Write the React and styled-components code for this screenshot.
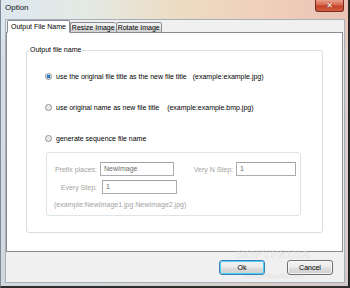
import React from 'react'
import styled, { createGlobalStyle } from 'styled-components'

const GlobalStyle = createGlobalStyle`
  html, body {
    margin: 0;
    padding: 0;
    background: #1e1e1e;
  }
  body {
    font-family: "Liberation Sans", Arial, sans-serif;
  }
`

const Window = styled.div`
  position: relative;
  width: 350px;
  height: 288px;
  box-sizing: border-box;
  display: flex;
  flex-direction: column;
  padding: 0 3px 3px 4px;
  border-left: 1px solid #7f8b96;
  border-right: 2px solid #262626;
  border-bottom: 2px solid #2e2e2e;
  background:
    linear-gradient(180deg, rgba(0,0,0,0) 0%, rgba(0,0,0,0) 10%, rgba(210,215,220,0.6) 20%, rgba(200,205,210,0.6) 100%),
    linear-gradient(90deg, #dde7ef 0%, #e4eae4 25%, #ecdcc4 50%, #f0d0ba 75%, #e9c3b6 100%);
  overflow: hidden;
`

const TitleBar = styled.div`
  height: 19px;
  display: flex;
  align-items: flex-start;
  justify-content: space-between;
  flex-shrink: 0;
`

const Title = styled.div`
  font-size: 8px;
  line-height: 8px;
  color: #111;
  margin-top: 4px;
`

const CloseButton = styled.div`
  width: 29px;
  height: 12px;
  margin-right: 1px;
  box-sizing: border-box;
  border: 1px solid #7a2a1e;
  border-top: none;
  border-radius: 0 0 3px 3px;
  background: linear-gradient(180deg, #e9a08a 0%, #d8674b 45%, #c3412a 55%, #d0603f 100%);
  display: flex;
  align-items: center;
  justify-content: center;
  color: #fff;
  font-size: 8px;
  font-weight: 700;
  font-family: "DejaVu Sans", sans-serif;
  text-shadow: 0 0 1px #5a1a10;
`

const Client = styled.div`
  flex: 1;
  display: flex;
  flex-direction: column;
  background: #f0f0f0;
  border: 1px solid #a7b0b8;
  box-sizing: border-box;
`

const TabStrip = styled.div`
  display: flex;
  align-items: flex-end;
  height: 13px;
  padding: 0 0 0 1px;
  position: relative;
  z-index: 1;
`

const Tab = styled.div`
  height: ${p => (p.active ? '13px' : '11px')};
  box-sizing: border-box;
  padding: 0 ${p => (p.active ? '3px' : '1px')};
  border: 1px solid #898c95;
  border-bottom: ${p => (p.active ? '1px solid #fff' : '1px solid #898c95')};
  border-right: ${p => (p.last || p.active ? '1px solid #898c95' : 'none')};
  border-radius: 2px 2px 0 0;
  background: ${p => (p.active ? '#fff' : 'linear-gradient(180deg, #f2f2f2 0%, #ebebeb 50%, #dddddd 51%, #cfcfcf 100%)')};
  font-size: 7px;
  line-height: ${p => (p.active ? '11px' : '9px')};
  color: #000;
  white-space: nowrap;
`

const Panel = styled.div`
  height: 220px;
  margin: -1px 1px 0 0;
  background: #fff;
  border: 1px solid #898c95;
  box-sizing: border-box;
  display: flex;
  flex-direction: column;
`

const Group = styled.fieldset`
  margin: 13px 19px 18px 19px;
  padding: 0;
  border: 1px solid #d5dfe5;
  border-radius: 3px;
  flex: 1;
  display: flex;
  flex-direction: column;
  min-width: 0;
`

const Legend = styled.legend`
  font-size: 7px;
  line-height: 8px;
  padding: 0 1px;
  margin-left: 2px;
  color: #000;
`

const OptionRow = styled.label`
  display: flex;
  align-items: center;
  height: 10px;
  margin: ${p => p.top}px 0 0 18px;
  font-size: 7px;
  color: #000;
`

const Radio = styled.span`
  width: 7px;
  height: 7px;
  box-sizing: border-box;
  border-radius: 50%;
  border: 1px solid #8f8f8f;
  background: ${p => (p.checked
    ? 'radial-gradient(circle, #2a8fdc 0%, #1c6bb5 45%, #dfe7ee 55%, #f4f4f4 100%)'
    : 'radial-gradient(circle, #e4e4e4 0%, #f6f6f6 100%)')};
  margin-right: 4px;
  flex-shrink: 0;
`

const Hint = styled.span`
  margin-left: ${p => p.gap}px;
`

const SequenceBox = styled.div`
  margin: 9px 21px 15px 19px;
  height: 64px;
  border: 1px solid #dce4ea;
  border-radius: 3px;
  box-sizing: border-box;
  padding: 9px 0 0 7px;
  display: flex;
  flex-direction: column;
`

const FieldRow = styled.div`
  display: flex;
  align-items: center;
  height: 14px;
  margin-bottom: 4px;
`

const FieldLabel = styled.span`
  width: ${p => p.w}px;
  text-align: right;
  font-size: 7px;
  color: #a3a3a3;
  margin-right: 3px;
  white-space: nowrap;
`

const Input = styled.div`
  width: ${p => p.w}px;
  height: 14px;
  box-sizing: border-box;
  border: 1px solid #abadb3;
  border-top-color: #9ea1a8;
  background: #fff;
  font-size: 7px;
  line-height: 12px;
  padding-left: 3px;
  color: #6b6b6b;
  margin-left: ${p => p.ml || 0}px;
`

const ExampleText = styled.div`
  font-size: 7px;
  color: #a3a3a3;
  margin-top: 3px;
`

const Footer = styled.div`
  flex: 1;
  display: flex;
  justify-content: flex-end;
  align-items: center;
  padding-right: 11px;
  gap: 22px;
`

const Button = styled.div`
  width: 46px;
  height: 15px;
  box-sizing: border-box;
  border: 1px solid ${p => (p.focused ? '#3c7fb1' : '#707070')};
  border-radius: 3px;
  background: linear-gradient(180deg, #f2f2f2 0%, #ebebeb 48%, #dddddd 52%, #cfcfcf 100%);
  box-shadow: inset 0 0 0 1px ${p => (p.focused ? '#48d2fa' : 'rgba(255,255,255,0.7)')};
  font-size: 7px;
  line-height: 13px;
  text-align: center;
  color: #000;
`

const Watermark = styled.div`
  position: absolute;
  left: 236px;
  top: 249px;
  color: rgba(255, 255, 255, 0.5);
  text-shadow: 0 0 1px rgba(140, 140, 140, 0.3);
  font-family: "DejaVu Serif", serif;
  font-size: 11px;
  letter-spacing: 0.5px;
  line-height: 11px;
  pointer-events: none;
  text-align: center;

  & small {
    display: block;
    font-size: 6px;
    line-height: 8px;
    letter-spacing: 0;
    margin-top: 12px;
  }
`

const App = () => (
  <>
    <GlobalStyle />
    <Window>
      <TitleBar>
        <Title>Option</Title>
        <CloseButton>✕</CloseButton>
      </TitleBar>
      <Client>
        <TabStrip>
          <Tab active>Output File Name</Tab>
          <Tab>Resize Image</Tab>
          <Tab last>Rotate Image</Tab>
        </TabStrip>
        <Panel>
          <Group>
            <Legend>Output file name</Legend>
            <OptionRow top={17}>
              <Radio checked />
              use the original file title as the new file title
              <Hint gap={6}>(example:example.jpg)</Hint>
            </OptionRow>
            <OptionRow top={21}>
              <Radio />
              use original name as new file title
              <Hint gap={8}>(example:example.bmp.jpg)</Hint>
            </OptionRow>
            <OptionRow top={21}>
              <Radio />
              generate sequence file name
            </OptionRow>
            <SequenceBox>
              <FieldRow>
                <FieldLabel w={43}>Prefix places:</FieldLabel>
                <Input w={74}>NewImage</Input>
                <FieldLabel w={59}>Very N Step:</FieldLabel>
                <Input w={60}>1</Input>
              </FieldRow>
              <FieldRow>
                <FieldLabel w={43}>Every Step:</FieldLabel>
                <Input w={75} ml={2}>1</Input>
              </FieldRow>
              <ExampleText>(example:NewImage1.jpg NewImage2.jpg)</ExampleText>
            </SequenceBox>
          </Group>
        </Panel>
        <Footer>
          <Button focused>Ok</Button>
          <Button>Cancel</Button>
        </Footer>
      </Client>
      <Watermark>
        SOFTPEDIA
        <small>www.softpedia.com</small>
      </Watermark>
    </Window>
  </>
)

export default App
